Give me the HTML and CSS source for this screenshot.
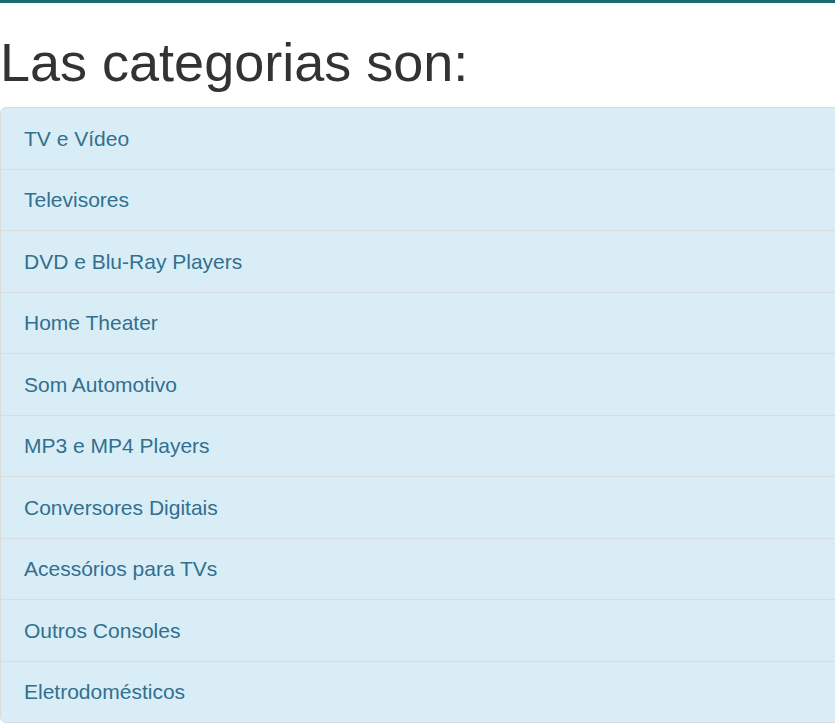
FILE: index.html
```html
<!DOCTYPE html>
<html lang="es">
<head>
<meta charset="utf-8">
<title>Categorias</title>
<link rel="stylesheet" href="styles.css">
</head>
<body>
<div class="topbar"></div>
<h1 class="title">Las categorias son:</h1>
<ul class="list-group">
  <li class="list-item">TV e Vídeo</li>
  <li class="list-item">Televisores</li>
  <li class="list-item">DVD e Blu-Ray Players</li>
  <li class="list-item">Home Theater</li>
  <li class="list-item">Som Automotivo</li>
  <li class="list-item">MP3 e MP4 Players</li>
  <li class="list-item">Conversores Digitais</li>
  <li class="list-item">Acessórios para TVs</li>
  <li class="list-item">Outros Consoles</li>
  <li class="list-item">Eletrodomésticos</li>
</ul>
</body>
</html>
```
FILE: styles.css
```css
html {
  overflow: hidden;
}
body {
  margin: 0;
  font-family: "Liberation Sans", Arial, Helvetica, sans-serif;
  color: #333;
  background: #fff;
}
.topbar {
  height: 3px;
  background: #1b6a70;
}
.title {
  font-size: 54px;
  font-weight: 400;
  line-height: 1.1;
  margin: 30px 0 15px 0;
  color: #333;
}
.list-group {
  list-style: none;
  margin: 0;
  padding: 0;
  width: 860px;
}
.list-item {
  background: #d9edf7;
  color: #31708f;
  font-size: 21px;
  line-height: 30px;
  padding: 15px 23px;
  border: 1px solid #dcdcdc;
  margin-bottom: -1px;
  height: 62.5px;
  box-sizing: border-box;
  display: flex;
  align-items: center;
}
.list-item:first-child {
  border-top-left-radius: 6px;
  border-top-right-radius: 6px;
}
.list-item:last-child {
  border-bottom-left-radius: 6px;
  border-bottom-right-radius: 6px;
  margin-bottom: 0;
}
```
